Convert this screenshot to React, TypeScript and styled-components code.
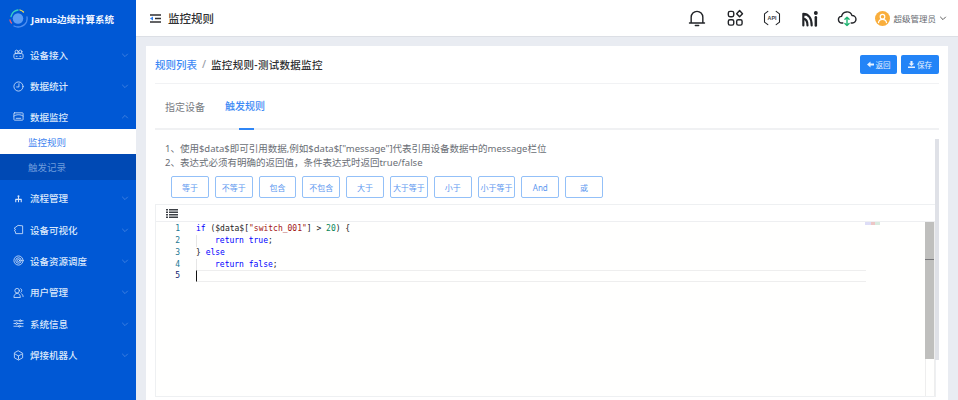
import React, { FunctionComponent, ReactNode } from 'react';
import styled, { createGlobalStyle } from 'styled-components';

const GlobalStyle = createGlobalStyle`
	html, body {
		margin: 0;
		padding: 0;
		height: 400px;
		overflow: hidden;
		background: #e9ecf2;
		font-family: "Noto Sans", "Noto Sans CJK SC", sans-serif;
	}
	* {
		box-sizing: border-box;
	}
`;

const Page = styled.div`
	display: flex;
	width: 958px;
	height: 400px;
	overflow: hidden;
`;

const Sidebar = styled.aside`
	flex: 0 0 136px;
	background: #0058d5;
	color: #dbe8fb;
`;

const Brand = styled.div`
	display: flex;
	align-items: center;
	height: 37px;
	padding-left: 8px;
	gap: 2px;
	color: #f2f7ff;
	font-size: 9.5px;
	font-weight: 700;
	white-space: nowrap;
`;

const MenuList = styled.nav`
	padding-top: 2px;
`;

const MenuRow = styled.div<{ $open?: boolean }>`
	display: flex;
	align-items: center;
	height: ${props => (props.$open ? '27.2px' : '31.4px')};
	padding: ${props => (props.$open ? '3px 7px 0 13px' : '0 7px 0 13px')};
	gap: 6px;
	font-size: 9.5px;
	font-weight: 500;
`;

const MenuLabel = styled.span`
	flex: 1;
	white-space: nowrap;
`;

const SubMenu = styled.div`
	padding-bottom: 2.5px;
`;

const SubRow = styled.div<{ $active?: boolean }>`
	display: flex;
	align-items: center;
	height: 25.5px;
	padding-left: 28px;
	font-size: 9.5px;
	background: ${props => (props.$active ? '#ffffff' : '#0049b4')};
	color: ${props => (props.$active ? '#3f86f0' : '#6d9bdc')};
`;

const Main = styled.div`
	flex: 1;
	display: flex;
	flex-direction: column;
	min-width: 0;
`;

const Header = styled.header`
	display: flex;
	align-items: center;
	flex: 0 0 37px;
	background: #ffffff;
	border-bottom: 1px solid #dcdfe5;
	padding: 0 11px 0 14px;
`;

const HeaderTitle = styled.h1`
	flex: 1;
	margin: 0 0 0 7px;
	font-size: 11.5px;
	font-weight: 500;
	color: #303133;
`;

const HeaderIcons = styled.div`
	display: flex;
	align-items: center;
	gap: 17.5px;
	margin-right: 18px;
`;

const User = styled.div`
	display: flex;
	align-items: center;
	gap: 3px;
	font-size: 8.5px;
	color: #666a70;
`;

const Avatar = styled.div`
	display: flex;
	align-items: center;
	justify-content: center;
	width: 15px;
	height: 15px;
	border-radius: 50%;
	background: #f9ae3c;
`;

const Content = styled.main`
	flex: 1;
	padding: 9px 10px 0 10px;
	min-height: 0;
`;

const Card = styled.section`
	position: relative;
	background: #ffffff;
	height: 100%;
	padding: 0 9px;
`;

const TopBar = styled.div`
	display: flex;
	align-items: center;
	height: 38px;
	border-bottom: 1px solid #f1f2f4;
`;

const Crumbs = styled.div`
	flex: 1;
	display: flex;
	gap: 5px;
	font-size: 10.5px;
	font-weight: 500;
	color: #303133;
`;

const CrumbLink = styled.span`
	color: #3d89f5;
`;

const CrumbSep = styled.span`
	color: #9aa0a8;
`;

const CrumbCurrent = styled.span`
	letter-spacing: 0.3px;
`;

const ActionButton = styled.button<{ $w: number }>`
	display: flex;
	align-items: center;
	justify-content: center;
	gap: 2px;
	height: 19px;
	padding: 0;
	margin-left: 4px;
	width: ${props => props.$w}px;
	background: #2384f7;
	border: 0;
	border-radius: 2px;
	color: #e6f1ff;
	font-family: inherit;
	font-size: 7.5px;
`;

const Tabs = styled.div`
	display: flex;
	height: 46px;
	border-bottom: 2px solid #f0f1f3;
	padding-left: 10px;
	gap: 20px;
`;

const Tab = styled.div<{ $active?: boolean }>`
	position: relative;
	padding-top: ${props => (props.$active ? '14px' : '15px')};
	font-size: 10px;
	font-weight: ${props => (props.$active ? 500 : 400)};
	color: ${props => (props.$active ? '#3d89f5' : '#777b82')};

	${props => props.$active && `
		&::after {
			content: '';
			position: absolute;
			left: 14px;
			bottom: -2px;
			width: 15px;
			height: 2px;
			background: #2f86f6;
		}
	`}
`;

const Hints = styled.div`
	padding: 12px 0 0 10px;
	font-size: 9.5px;
	line-height: 13.5px;
	color: #6a6e75;
	white-space: nowrap;
`;

const OpRow = styled.div`
	display: flex;
	gap: 6px;
	padding: 7px 0 0 16px;
`;

const OpButton = styled.button`
	flex: 0 0 37.8px;
	height: 22px;
	padding: 0;
	background: #ffffff;
	border: 1px solid #93c0f8;
	border-radius: 2px;
	color: #5c97ef;
	font-family: inherit;
	font-size: 8px;
	white-space: nowrap;
`;

const Editor = styled.div`
	position: relative;
	margin-top: 6px;
	width: 781px;
	height: 193px;
	border: 1px solid #eef0f2;
	background: #fffffe;
`;

const EditorToolbar = styled.div`
	display: flex;
	align-items: center;
	height: 17px;
	padding-left: 10px;
	background: #ffffff;
	border-bottom: 1px solid #eeeff1;
`;

const CodeArea = styled.div`
	display: flex;
	height: 174px;
	padding-top: 1px;
	font-family: "DejaVu Sans Mono", "Liberation Mono", monospace;
	font-size: 8px;
	line-height: 11.85px;
`;

const Gutter = styled.div`
	flex: 0 0 40px;
	padding-right: 16px;
	text-align: right;
	color: #237893;
`;

const ActiveNumber = styled.div`
	color: #0b216f;
`;

const Lines = styled.div`
	flex: 0 0 670px;
	white-space: pre;
	color: #222222;
`;

const CodeLine = styled.div<{ $current?: boolean }>`
	height: 11.85px;
	${props => props.$current && `
		border-top: 1px solid #eeeeee;
		border-bottom: 1px solid #eeeeee;
		border-left: 1.5px solid #111111;
	`}
`;

const Guide = styled.span`
	display: inline-block;
	width: 19px;
	height: 11.85px;
	vertical-align: top;
	border-left: 1px solid #e6e6e6;
`;

const Keyword = styled.span`
	color: #0000ff;
`;

const Str = styled.span`
	color: #a31515;
`;

const Num = styled.span`
	color: #098658;
`;

const Minimap = styled.div`
	position: absolute;
	right: 0;
	top: 17px;
	bottom: 0;
	width: 70px;
	display: flex;
	justify-content: flex-end;
`;

const MinimapDots = styled.div`
	position: absolute;
	left: 0;
	top: 0;
	width: 15px;
	height: 3px;
	background: linear-gradient(90deg, #d5d5f5 0 40%, #e8b8b8 40% 70%, #cfe6d8 70% 100%);
	opacity: 0.8;
`;

const MinimapTrack = styled.div`
	width: 10px;
	height: 100%;
	border-left: 1px solid #eeeeee;
	border-right: 1px solid #eeeeee;
`;

const MinimapSlider = styled.div`
	width: 9px;
	height: 137px;
	margin-left: -1px;
	background: #bfbfbd;
	position: relative;

	&::after {
		content: '';
		position: absolute;
		left: 0;
		right: 0;
		top: 37px;
		height: 1px;
		background: #77777a;
	}
`;

const CardScroll = styled.div`
	position: absolute;
	top: 93px;
	right: 9px;
	width: 4px;
	height: 221px;
	background: #dfe1e7;
`;

const iconProps = {
	width: 11,
	height: 11,
	viewBox: '0 0 24 24',
	fill: 'none',
	stroke: '#d5e4fa',
	strokeWidth: 1.8,
	strokeLinecap: 'round' as const,
	strokeLinejoin: 'round' as const,
};

const Chevron: FunctionComponent<{ up?: boolean }> = ({ up }) => (
	<svg width="8" height="8" viewBox="0 0 10 10" fill="none" stroke="#3f80e0" strokeWidth="1.2">
		<path d={up ? 'M1.5 6.5 5 3l3.5 3.5' : 'M1.5 3.5 5 7l3.5-3.5'} />
	</svg>
);

const icons: Record<string, ReactNode> = {
	device: (
		<svg {...iconProps}>
			<rect x="2" y="10" width="20" height="11" rx="3" />
			<circle cx="8" cy="6" r="3.500" />
			<circle cx="16" cy="6" r="3.500" />
			<path d="M7 16h2M15 16h2" />
		</svg>
	),
	stats: (
		<svg {...iconProps}>
			<circle cx="12" cy="12" r="10" />
			<path d="M13 6v7H8" />
		</svg>
	),
	monitor: (
		<svg {...iconProps}>
			<rect x="2" y="4" width="20" height="16" rx="1.5" />
			<path d="M2 11c5-4 15-4 20 0M7 16h10" />
		</svg>
	),
	flow: (
		<svg {...iconProps} strokeWidth={2.4}>
			<path d="M12 8v5M6 19v-5h12v5M12 14v5" />
			<circle cx="12" cy="7" r="1" />
		</svg>
	),
	visual: (
		<svg {...iconProps}>
			<path d="M3 9 11 3l10 1v17H6l-1-5-2-1 2-3z" />
		</svg>
	),
	schedule: (
		<svg {...iconProps}>
			<circle cx="12" cy="12" r="10" />
			<circle cx="12" cy="12" r="6" />
			<circle cx="12" cy="12" r="2.500" />
		</svg>
	),
	users: (
		<svg {...iconProps}>
			<circle cx="9" cy="8" r="5" />
			<path d="M2 22c0-5 3-8 7-8s7 3 7 8zM17 3.500c3 1 3 7 0 8.500M19 15c2 1 3 3.500 3 6" />
		</svg>
	),
	system: (
		<svg {...iconProps}>
			<path d="M2 6h12M18 6h4M2 12h4M10 12h12M2 18h10M16 18h6" />
			<circle cx="16" cy="6" r="2" />
			<circle cx="8" cy="12" r="2" />
			<circle cx="14" cy="18" r="2" />
		</svg>
	),
	robot: (
		<svg {...iconProps}>
			<path d="M12 2 21 7v10l-9 5-9-5V7z" />
			<path d="M5 9l7 4 7-4M12 13v7" />
		</svg>
	),
};

const Logo = () => (
	<svg width="21" height="21" viewBox="0 0 42 42" fill="none" strokeWidth="2.600" strokeLinecap="round">
		<circle cx="20" cy="21" r="10.500" fill="#5b9df5" />
		<path d="M6 17C8 9 13 5 20 4" stroke="#39d0c0" />
		<path d="M24 4c3 1 5 2 7 4" stroke="#f4dc4a" />
		<path d="M4 24c0 2 1 4 3 6" stroke="#ee5f6a" />
		<path d="M12 36c8 4 20 2 25-8 1-3 2-6 1-10" stroke="#4f8ff0" />
	</svg>
);

const MenuToggle = () => (
	<svg width="11" height="9" viewBox="0 0 11 9" fill="none">
		<path d="M0 1h11M5 4.500h6M0 8h11" stroke="#303133" strokeWidth="1.300" />
		<path d="M0 4.500 3 2.500v4z" fill="#2f7ef0" />
	</svg>
);

const HeaderIcon: FunctionComponent<{ children: ReactNode }> = ({ children }) => (
	<svg width="20" height="20" viewBox="0 0 24 24" fill="none" stroke="#222428" strokeWidth="1.700" strokeLinecap="round" strokeLinejoin="round">
		{children}
	</svg>
);

const ApiLabel = styled.text`
	font-family: "Liberation Sans", sans-serif;
	font-size: 6.5px;
	font-weight: 700;
	fill: #44474c;
	stroke: none;
`;

const OPERATORS = ['等于', '不等于', '包含', '不包含', '大于', '大于等于', '小于', '小于等于', 'And', '或'];

const MENU_TOP = [
	{ icon: 'device', label: '设备接入' },
	{ icon: 'stats', label: '数据统计' },
];

const MENU_BOTTOM = [
	{ icon: 'flow', label: '流程管理' },
	{ icon: 'visual', label: '设备可视化' },
	{ icon: 'schedule', label: '设备资源调度' },
	{ icon: 'users', label: '用户管理' },
	{ icon: 'system', label: '系统信息' },
	{ icon: 'robot', label: '焊接机器人' },
];

const App: FunctionComponent = () => {
	return (
		<Page>
			<GlobalStyle />
			<Sidebar>
				<Brand>
					<Logo />
					Janus边缘计算系统
				</Brand>
				<MenuList>
					{MENU_TOP.map(item => (
						<MenuRow key={item.label}>
							{icons[item.icon]}
							<MenuLabel>{item.label}</MenuLabel>
							<Chevron />
						</MenuRow>
					))}
					<MenuRow $open>
						{icons.monitor}
						<MenuLabel>数据监控</MenuLabel>
						<Chevron up />
					</MenuRow>
					<SubMenu>
						<SubRow $active>监控规则</SubRow>
						<SubRow>触发记录</SubRow>
					</SubMenu>
					{MENU_BOTTOM.map(item => (
						<MenuRow key={item.label}>
							{icons[item.icon]}
							<MenuLabel>{item.label}</MenuLabel>
							<Chevron />
						</MenuRow>
					))}
				</MenuList>
			</Sidebar>
			<Main>
				<Header>
					<MenuToggle />
					<HeaderTitle>监控规则</HeaderTitle>
					<HeaderIcons>
						<HeaderIcon>
							<path d="M5 18V11a7 7 0 0 1 14 0v7zM3 18h18M10 21h4" />
						</HeaderIcon>
						<HeaderIcon>
							<rect x="4" y="4" width="6.500" height="6.500" rx="2" />
							<rect x="4" y="14" width="6.500" height="6.500" rx="2" />
							<rect x="14" y="14" width="6.500" height="6.500" rx="2" />
							<path d="M17.500 3 21 6.800 17.500 10.500 14 6.800z" />
						</HeaderIcon>
						<HeaderIcon>
							<path d="M7 4 3 7v10l4 3M17 4l4 3v10l-4 3" strokeWidth="1.300" />
							<ApiLabel x="12" y="14.500" textAnchor="middle">API</ApiLabel>
						</HeaderIcon>
						<HeaderIcon>
							<path d="M4 21V7c6 0 10 5 10 14M4 13c3 0 5 3 5 8" strokeWidth="2.600" />
							<path d="M19 11v10" strokeWidth="3" />
							<circle cx="19" cy="6" r="1.500" fill="#222428" />
						</HeaderIcon>
						<HeaderIcon>
							<path d="M7 18H6a4 4 0 0 1-.500-8A6.500 6.500 0 0 1 18 9a4.500 4.500 0 0 1 .5 9H17" />
							<path d="M12 11v10M9.500 13.500 12 11l2.500 2.500M9.500 18.500 12 21l2.500-2.500" stroke="#22b573" />
						</HeaderIcon>
					</HeaderIcons>
					<User>
						<Avatar>
							<svg width="11" height="11" viewBox="0 0 24 24" fill="none" stroke="#ffffff" strokeWidth="2.500">
								<circle cx="12" cy="8" r="5" />
								<path d="M3 22c1-6 4-8 9-8s8 2 9 8" />
							</svg>
						</Avatar>
						超级管理员
						<svg width="8" height="8" viewBox="0 0 10 10" fill="none" stroke="#555" strokeWidth="1.200">
							<path d="M1.500 3.500 5 7l3.500-3.500" />
						</svg>
					</User>
				</Header>
				<Content>
					<Card>
						<TopBar>
							<Crumbs>
								<CrumbLink>规则列表</CrumbLink>
								<CrumbSep>/</CrumbSep>
								<CrumbCurrent>监控规则-测试数据监控</CrumbCurrent>
							</Crumbs>
							<ActionButton $w={37}>
								<svg width="7" height="7" viewBox="0 0 10 10" fill="#e6f1ff">
									<path d="M0 5 5 .8v2.700h5v3H5v2.700z" />
								</svg>
								返回
							</ActionButton>
							<ActionButton $w={38}>
								<svg width="7" height="7" viewBox="0 0 10 10" fill="#e6f1ff">
									<path d="M3.500 0h3v3.500H9L5 7 1 3.500h2.500zM0 8h10v2H0z" />
								</svg>
								保存
							</ActionButton>
						</TopBar>
						<Tabs>
							<Tab>指定设备</Tab>
							<Tab $active>触发规则</Tab>
						</Tabs>
						<Hints>
							<div>1、使用$data$即可引用数据,例如$data$["message"]代表引用设备数据中的message栏位</div>
							<div>2、表达式必须有明确的返回值，条件表达式时返回true/false</div>
						</Hints>
						<OpRow>
							{OPERATORS.map(op => (
								<OpButton key={op}>{op}</OpButton>
							))}
						</OpRow>
						<Editor>
							<EditorToolbar>
								<svg width="12" height="9" viewBox="0 0 12 9" fill="#3c4046">
									<path d="M0 0h2v1.500H0zM3 0h9v1.500H3zM0 2.500h2V4H0zM3 2.500h9V4H3zM0 5h2v1.500H0zM3 5h9v1.500H3zM0 7.500h2V9H0zM3 7.500h9V9H3z" />
								</svg>
							</EditorToolbar>
							<CodeArea>
								<Gutter>
									<div>1</div>
									<div>2</div>
									<div>3</div>
									<div>4</div>
									<ActiveNumber>5</ActiveNumber>
								</Gutter>
								<Lines>
									<CodeLine><Keyword>if</Keyword> ($data$[<Str>"switch_001"</Str>] &gt; <Num>20</Num>) {'{'}</CodeLine>
									<CodeLine><Guide /><Keyword>return</Keyword> <Keyword>true</Keyword>;</CodeLine>
									<CodeLine>{'} '}<Keyword>else</Keyword></CodeLine>
									<CodeLine><Guide /><Keyword>return</Keyword> <Keyword>false</Keyword>;</CodeLine>
									<CodeLine $current />
								</Lines>
							</CodeArea>
							<Minimap>
								<MinimapDots />
								<MinimapTrack>
									<MinimapSlider />
								</MinimapTrack>
							</Minimap>
						</Editor>
						<CardScroll />
					</Card>
				</Content>
			</Main>
		</Page>
	);
};

export default App;
